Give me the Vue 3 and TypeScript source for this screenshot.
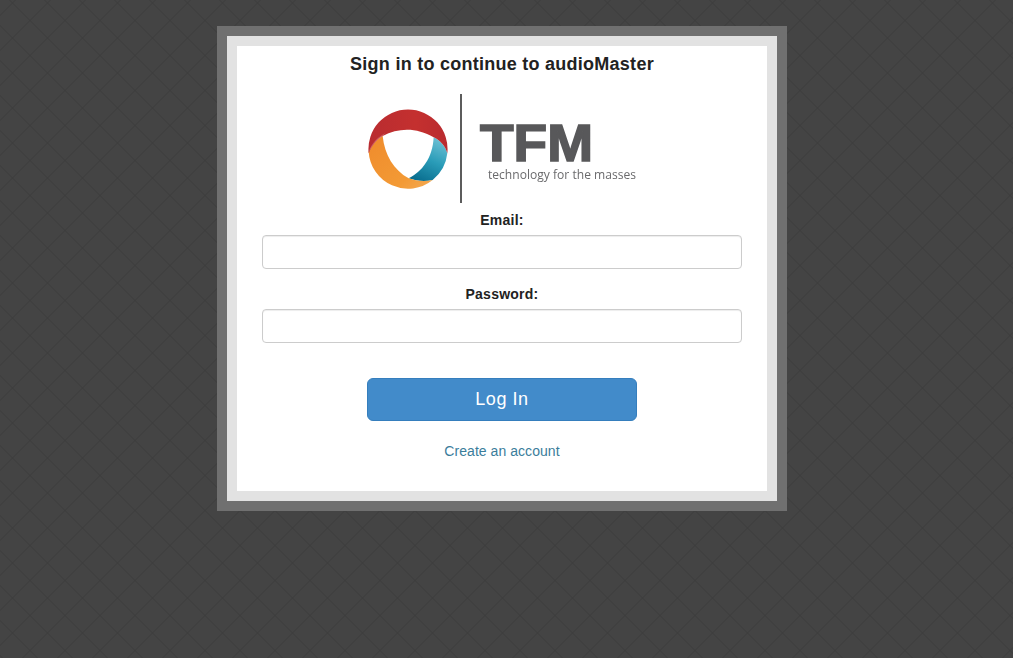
<script setup lang="ts">
import { ref } from 'vue'

const email = ref<string>('')
const password = ref<string>('')
</script>

<template>
  <main class="page">
    <section class="frame">
      <div class="mat">
        <div class="panel">
          <h1 class="title">Sign in to continue to audioMaster</h1>
          <svg class="logo" viewBox="2 0 300 125" width="300" height="125" role="img" aria-label="TFM technology for the masses">
            <defs>
              <linearGradient id="red" x1="0" y1="0" x2="1" y2="0">
                <stop offset="0" stop-color="#b92c30" />
                <stop offset="0.6" stop-color="#c4302f" />
                <stop offset="1" stop-color="#b92b2f" />
              </linearGradient>
              <linearGradient id="orange" x1="0" y1="0" x2="1" y2="1">
                <stop offset="0" stop-color="#ef8b2c" />
                <stop offset="0.7" stop-color="#f39a35" />
                <stop offset="1" stop-color="#f4ab55" />
              </linearGradient>
              <linearGradient id="teal" x1="0.7" y1="0" x2="0.3" y2="1">
                <stop offset="0" stop-color="#6cc0d4" />
                <stop offset="0.5" stop-color="#2a9cb8" />
                <stop offset="1" stop-color="#0a6f90" />
              </linearGradient>
            </defs>
            <g class="mark" transform="translate(12 15) scale(0.3333)">
              <path fill="url(#teal)" d="M215 112 C235 122 250 138 256 160 A118.7 118.7 0 0 1 212 240 C190 245 160 243 140 235 C180 215 212 175 215 112 Z" />
              <path fill="url(#orange)" d="M20 155 A118 118 0 0 0 212 240 C190 245 160 243 140 235 C95 210 68 165 62 108 C42 120 28 138 20 155 Z" />
              <path fill="url(#red)" d="M20 160 A118.7 118.7 0 1 1 256 160 C250 138 235 122 215 112 C165 82 110 82 62 108 C42 120 28 138 20 160 Z" />
              <path fill="#d9787a" opacity="0.6" d="M22 150 C32 128 46 112 70 99 L62 108 C42 120 30 136 21 158 Z" />
            </g>
            <rect x="110" y="9" width="2" height="109" fill="#5c5c5c" />
            <text class="tfm" x="130" y="76" textLength="113" lengthAdjust="spacingAndGlyphs">TFM</text>
            <text class="tag" x="138" y="94" textLength="148" lengthAdjust="spacingAndGlyphs">technology for the masses</text>
          </svg>
          <form class="form" @submit.prevent>
            <label class="field">
              <span class="label">Email:</span>
              <input v-model="email" class="input" type="email" />
            </label>
            <label class="field">
              <span class="label">Password:</span>
              <input v-model="password" class="input" type="password" />
            </label>
            <button class="submit" type="submit">Log In</button>
            <a class="link" href="#">Create an account</a>
          </form>
        </div>
      </div>
    </section>
  </main>
</template>

<style scoped>
.page {
  box-sizing: border-box;
  min-height: 658px;
  padding: 26px 9px 0 0;
  display: flex;
  justify-content: center;
  align-items: flex-start;
  font-family: "Liberation Sans", Arial, sans-serif;
  background-color: #444;
  background-image:
    linear-gradient(45deg, transparent 49.2%, #3c3c3c 49.2%, #3c3c3c 50.8%, transparent 50.8%),
    linear-gradient(-45deg, transparent 49.2%, #3c3c3c 49.2%, #3c3c3c 50.8%, transparent 50.8%);
  background-size: 35px 35px;
  background-position: -5px -14.5px;
}
.frame {
  width: 570px;
  box-sizing: border-box;
  border: 10px solid #707070;
}
.mat {
  border: 10px solid #e2e2e2;
}
.panel {
  background: #fff;
  padding: 8px 25px 30px;
  display: flex;
  flex-direction: column;
  align-items: center;
  color: #222;
}
.title {
  margin: 0;
  font-size: 18px;
  line-height: 20px;
  font-weight: 700;
  letter-spacing: 0.26px;
}
.logo {
  display: block;
  margin-top: 11px;
}
.mark,
.tfm,
.tag {
  filter: blur(0.3px);
}
.tfm {
  font-family: "Liberation Sans", Arial, sans-serif;
  font-weight: 700;
  font-size: 51px;
  fill: #58585a;
  stroke: #58585a;
  stroke-width: 1.6px;
}
.tag {
  font-family: "Open Sans", sans-serif;
  font-size: 12px;
  fill: #6a6a6c;
}
.form {
  width: 100%;
  display: flex;
  flex-direction: column;
  align-items: center;
}
.field {
  width: 100%;
  display: flex;
  flex-direction: column;
  align-items: center;
  gap: 5px;
  margin-bottom: 15px;
}
.label {
  font-size: 14px;
  line-height: 20px;
  font-weight: 700;
  letter-spacing: 0.25px;
}
.input {
  box-sizing: border-box;
  width: 100%;
  height: 34px;
  border: 1px solid #ccc;
  border-radius: 4px;
  background: #fff;
  box-shadow: inset 0 1px 1px rgba(0, 0, 0, 0.075);
  padding: 6px 12px;
  outline: none;
}
.submit {
  box-sizing: border-box;
  width: 270px;
  height: 43px;
  margin-top: 20px;
  border: 1px solid #357ebd;
  border-radius: 6px;
  background: #428bca;
  color: #fff;
  font-family: inherit;
  font-size: 18px;
  letter-spacing: 0.55px;
  padding: 0;
}
.link {
  margin-top: 20px;
  font-size: 14px;
  line-height: 20px;
  letter-spacing: 0.05px;
  color: #3a7d9b;
  text-decoration: none;
}
</style>
